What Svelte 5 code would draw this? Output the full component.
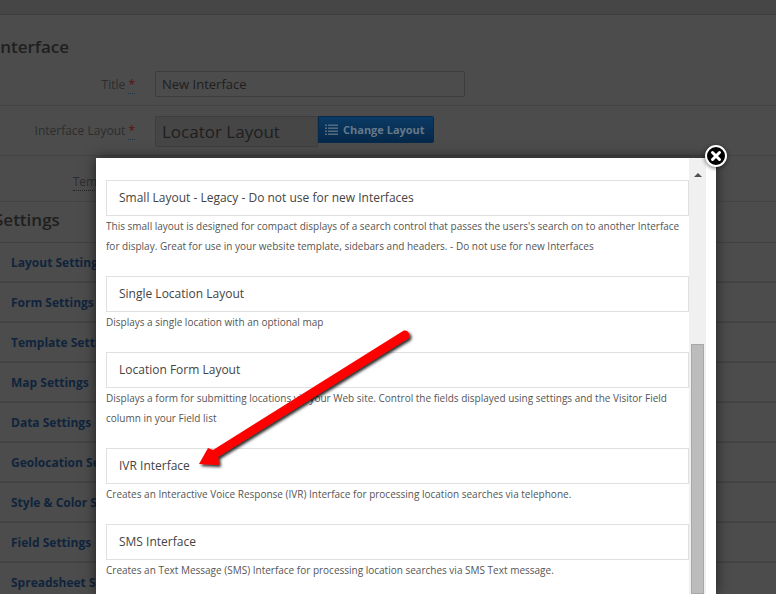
<script>
  const settings = [
    "Layout Settings",
    "Form Settings",
    "Template Settings",
    "Map Settings",
    "Data Settings",
    "Geolocation Settings",
    "Style & Color Settings",
    "Field Settings",
    "Spreadsheet Settings"
  ];

  const layouts = [
    {
      name: "Small Layout - Legacy - Do not use for new Interfaces",
      desc: "This small layout is designed for compact displays of a search control that passes the users's search on to another Interface for display. Great for use in your website template, sidebars and headers. - Do not use for new Interfaces"
    },
    { name: "Single Location Layout", desc: "Displays a single location with an optional map" },
    {
      name: "Location Form Layout",
      desc: "Displays a form for submitting locations via your Web site. Control the fields displayed using settings and the Visitor Field column in your Field list"
    },
    {
      name: "IVR Interface",
      desc: "Creates an Interactive Voice Response (IVR) Interface for processing location searches via telephone."
    },
    {
      name: "SMS Interface",
      desc: "Creates an Text Message (SMS) Interface for processing location searches via SMS Text message."
    }
  ];
</script>

<div class="page">
  <div class="topbar"></div>

  <h2 class="heading first">Interface</h2>

  <div class="row title-row">
    <span class="label">Title <em>*</em></span>
    <input class="title-input" value="New Interface" readonly />
  </div>

  <div class="row layout-row">
    <span class="label">Interface Layout <em>*</em></span>
    <div class="current">Locator Layout</div>
    <button class="change">
      <svg width="13" height="12" viewBox="0 0 13 12">
        <g fill="#5b7083">
          <rect x="0" y="0.5" width="2" height="1.4" />
          <rect x="3" y="0.5" width="10" height="1.4" />
          <rect x="0" y="3.5" width="2" height="1.4" />
          <rect x="3" y="3.5" width="10" height="1.4" />
          <rect x="0" y="6.5" width="2" height="1.4" />
          <rect x="3" y="6.5" width="10" height="1.4" />
          <rect x="0" y="9.5" width="2" height="1.4" />
          <rect x="3" y="9.5" width="10" height="1.4" />
        </g>
      </svg>
      Change Layout
    </button>
  </div>

  <div class="row template-row">
    <span class="label"><u>Template *</u></span>
  </div>

  <h2 class="heading second">Settings</h2>

  <ul class="settings">
    {#each settings as s}
      <li>{s}</li>
    {/each}
  </ul>

  <div class="modal">
    <div class="list">
      {#each layouts as l}
        <div class="box">{l.name}</div>
        <p>{l.desc}</p>
      {/each}
    </div>
    <div class="track">
      <span class="up"></span>
      <div class="thumb"></div>
    </div>
    <div class="close">
      <svg width="12" height="12" viewBox="0 0 12 12">
        <path d="M2.5 2.5 L9.5 9.5 M9.5 2.5 L2.5 9.5" stroke="#fff" stroke-width="3" stroke-linecap="round" />
      </svg>
    </div>
  </div>

  <svg class="arrow" width="240" height="160" viewBox="0 0 240 160">
    <defs>
      <filter id="arrow-shadow" x="-20%" y="-20%" width="140%" height="140%">
        <feDropShadow dx="2" dy="2" stdDeviation="1.5" flood-color="#000" flood-opacity="0.85" />
      </filter>
    </defs>
    <path
      d="M223 11 C226 9.5 229 12 229.5 15 C229.5 18 228 19 225 20.5 L38 137 L39 145 L19 144 L28 128 L33 130 Z"
      fill="#f00"
      filter="url(#arrow-shadow)"
    />
  </svg>
</div>

<style>
  :global(body) {
    margin: 0;
    background: #4c4c4c;
  }

  .page {
    position: relative;
    width: 776px;
    height: 594px;
    overflow: hidden;
    background: #4c4c4c;
    font-family: "Open Sans", sans-serif;
    color: #2a2a2a;
  }

  .topbar {
    height: 14px;
    background: #464646;
    border-bottom: 1px solid #3e3e3e;
  }

  .heading {
    margin: 0;
    font-size: 17px;
    line-height: 24px;
    font-weight: 600;
    color: #1f1f1f;
  }

  .heading.first {
    margin-top: 20px;
    margin-left: -5px;
  }

  .heading.second {
    margin-top: 6px;
    margin-left: -6px;
  }

  .row {
    display: flex;
    align-items: flex-start;
    border-bottom: 1px solid #444;
    box-sizing: border-box;
  }

  .title-row {
    height: 47px;
    padding-top: 12px;
  }

  .layout-row {
    height: 50px;
    padding-top: 10px;
  }

  .template-row {
    height: 46px;
    padding-top: 12px;
  }

  .label {
    width: 135px;
    text-align: right;
    font-size: 12px;
    line-height: 18px;
    padding-top: 5px;
    color: #2c2c2c;
    flex: none;
    white-space: nowrap;
  }

  .layout-row .label {
    padding-top: 6px;
  }

  .label u {
    text-decoration: none;
    border-bottom: 1px dotted #222;
  }

  .label em {
    color: #5c1010;
    font-style: normal;
    border-bottom: 1px dotted #1c3350;
  }

  .title-input {
    margin-left: 20px;
    width: 310px;
    height: 26px;
    box-sizing: border-box;
    background: #4c4c4c;
    border: 1px solid #3c3c3c;
    border-radius: 2px;
    padding: 0 6px;
    font: 13px "Open Sans", sans-serif;
    color: #1e1e1e;
    outline: none;
  }

  .current {
    margin-left: 20px;
    width: 163px;
    height: 31px;
    box-sizing: border-box;
    background: #464646;
    border: 1px solid #3e3e3e;
    border-radius: 2px 0 0 2px;
    padding: 0 6px;
    font-size: 17px;
    line-height: 29px;
    color: #1e1e1e;
  }

  .change {
    height: 27px;
    width: 116px;
    box-sizing: border-box;
    background: linear-gradient(#0b3a64, #05284a);
    border: 1px solid #052a4b;
    border-radius: 0 2px 2px 0;
    padding: 0 0 0 6px;
    display: flex;
    align-items: center;
    gap: 5px;
    font: 700 11px "Open Sans", sans-serif;
    color: #66798a;
  }

  .settings {
    list-style: none;
    margin: 10px 0 0;
    padding: 0;
  }

  .settings li {
    height: 40px;
    box-sizing: border-box;
    border-top: 1px solid #414141;
    border-bottom: 1px solid #454545;
    padding: 1px 0 0 11px;
    font-size: 12px;
    font-weight: 700;
    line-height: 38px;
    color: #10243c;
    white-space: nowrap;
  }

  .modal {
    position: absolute;
    left: 96px;
    top: 158px;
    width: 620px;
    height: 436px;
    box-sizing: border-box;
    background: #fff;
    box-shadow: 0 0 12px rgba(0, 0, 0, 0.6);
    display: flex;
    padding: 0 10px;
  }

  .list {
    width: 583px;
    flex: none;
    padding-top: 22px;
  }

  .box {
    height: 36px;
    box-sizing: border-box;
    border: 1px solid #e0e0e0;
    padding-left: 12px;
    font-size: 12px;
    line-height: 34px;
    color: #444;
  }

  p {
    margin: 0 0 20px;
    font-size: 10px;
    line-height: 20px;
    color: #555;
  }

  .track {
    width: 17px;
    flex: none;
    background: #f0f0f0;
    display: flex;
    flex-direction: column;
    align-items: center;
  }

  .up {
    width: 0;
    height: 0;
    margin-top: 15px;
    border-left: 4px solid transparent;
    border-right: 4px solid transparent;
    border-bottom: 4px solid #505050;
  }

  .thumb {
    width: 13px;
    margin-top: 167px;
    flex: 1;
    box-sizing: border-box;
    background: #bcbcbc;
    border: 1px solid #a8a8a8;
  }

  .close {
    position: absolute;
    right: -11px;
    top: -13px;
    width: 22px;
    height: 22px;
    box-sizing: border-box;
    border: 2px solid #fff;
    border-radius: 50%;
    background: #000;
    box-shadow: 0 1px 4px rgba(0, 0, 0, 0.6);
    display: flex;
    align-items: center;
    justify-content: center;
  }

  .arrow {
    position: absolute;
    left: 180px;
    top: 320px;
    pointer-events: none;
  }
</style>
